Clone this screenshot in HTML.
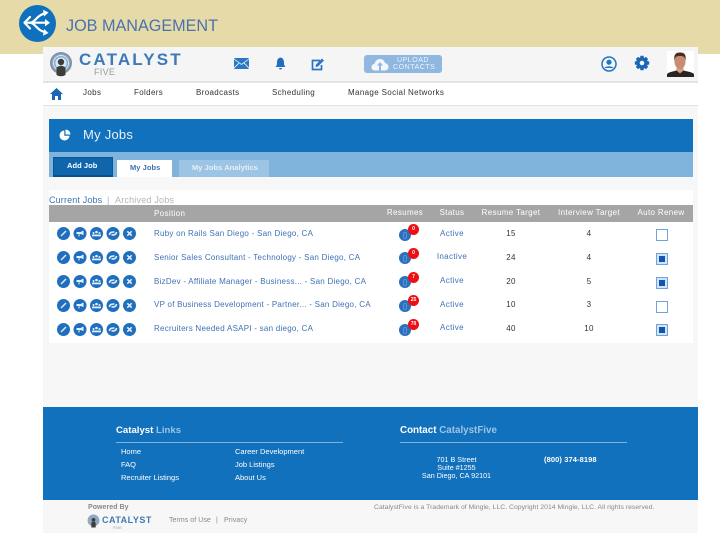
<!DOCTYPE html>
<html><head><meta charset="utf-8">
<style>
html,body{margin:0;padding:0;background:#fff}
body{width:720px;height:540px;position:relative;overflow:hidden;font-family:"Liberation Sans",sans-serif;filter:blur(.35px)}
.a{position:absolute;white-space:nowrap}
.t{position:absolute;white-space:nowrap;font-size:8px;line-height:10px;letter-spacing:.35px;color:#333}
.c{transform:translateX(-50%)}
.l{color:#3f72b4}
.p{letter-spacing:.25px}
.w{color:#fff}
.f{font-size:7.500px;letter-spacing:0}
.g{font-size:7px;letter-spacing:.05px;color:#888}
.bt{font-weight:bold;font-size:7.500px;letter-spacing:.05px}
.cb{position:absolute;left:656px;width:10px;height:10px;border:1px solid #6fa3dc;background:#fff}
.cb.on::after{content:"";position:absolute;left:2px;top:2px;width:6px;height:6px;background:#0f56b3}
.cb.on{background:#d5e4f5}
.r{position:absolute;left:399px;width:12px;height:12px;border-radius:50%;background:#2a70bd}
.r::after{content:"";position:absolute;left:4px;top:3px;border:1px solid #5d94d2;border-radius:2px;width:2px;height:5px}
.b{position:absolute;left:408px;width:11px;height:11px;border-radius:50%;background:#ee0f14;color:#fff;font-size:5px;font-weight:bold;line-height:11px;text-align:center}
</style></head><body>
<div class="a" style="left:0;top:0;width:720px;height:54px;background:#e6dba8"></div>
<svg class="a" style="left:19px;top:5px" width="37" height="37" viewBox="0 0 37 37">
<circle cx="18.500" cy="18.500" r="18.500" fill="#0f71bd"/>
<g fill="none" stroke="#fff" stroke-width="2.200" stroke-linecap="round" stroke-linejoin="round">
<path d="M11 12L5.500 17.700L11 23.500"/>
<path d="M6 17.700H27"/>
<path d="M11 17.700C16 17.700 18 10 25.500 8.500"/>
<path d="M11 17.700C16 17.700 18 25.500 25.500 27"/>
</g>
<g fill="#fff">
<path d="M26 14L31 17.700L26 21.400Z"/>
<path d="M24 4.700L29.500 7.500L25 11.500Z"/>
<path d="M25 24L29.500 28L24 30.700Z"/>
</g></svg>
<div class="a" style="left:66px;top:14px;font-size:16.200px;line-height:24px;color:#4a72ad">JOB MANAGEMENT</div>

<div class="a" style="left:43px;top:47px;width:655px;height:360px;background:#f7f7f7"></div>
<div class="a" style="left:43px;top:47px;width:655px;height:35px;background:#f5f5f5"></div>
<div class="a" style="left:43px;top:81px;width:655px;height:2px;background:#e3e3e3"></div>
<div class="a" style="left:43px;top:83px;width:655px;height:22px;background:#fff"></div>
<div class="a" style="left:43px;top:105px;width:655px;height:1px;background:#e3e3e3"></div>

<svg class="a" style="left:49px;top:51px" width="24" height="26" viewBox="0 0 24 26">
<circle cx="12" cy="12" r="11" fill="#8a8f96"/>
<circle cx="12" cy="12" r="9.300" fill="#7fa9d6"/>
<circle cx="12" cy="12" r="8" fill="#dfe8f1"/>
<circle cx="12" cy="12" r="7" fill="#7fa9d6"/>
<circle cx="12" cy="12" r="5.600" fill="#dfe8f1"/>
<circle cx="12" cy="11" r="3.200" fill="#3d3d3d"/>
<path d="M7.500 16.500Q12 13 16.500 16.500V24Q12 26.500 7.500 24Z" fill="#3d3d3d"/>
</svg>
<div class="a" style="left:79px;top:50px;font-size:17px;line-height:20px;font-weight:bold;color:#3e79b9;letter-spacing:2.150px">CATALYST</div>
<div class="a" style="left:94px;top:67px;font-size:9px;line-height:10px;color:#9b9b9b;letter-spacing:.3px">FIVE</div>

<svg class="a" style="left:234px;top:58px" width="15" height="11" viewBox="0 0 15 11"><rect width="15" height="11" rx="1" fill="#2a77c4"/><path d="M0 1L7.500 6.500L15 1M0 10L5 5M15 10L10 5" fill="none" stroke="#dbe8f5" stroke-width=".9"/></svg>
<svg class="a" style="left:275px;top:57px" width="11" height="13" viewBox="0 0 11 13"><path d="M5.500 0.500C3 1 2 3 2 5.500C2 8 1.500 9 .5 10H10.500C9.500 9 9 8 9 5.500C9 3 8 1 5.500 .5Z M4 11H7C7 13 4 13 4 11Z" fill="#1f6fbe"/></svg>
<svg class="a" style="left:311px;top:58px" width="14" height="13" viewBox="0 0 14 13"><path d="M9 2.500H1.500V11.500H10.500V7" fill="none" stroke="#2a77c4" stroke-width="1.700"/><path d="M4.500 9L5 6.500L11 .5L13 2.500L7 8.500Z" fill="#2a77c4"/></svg>

<div class="a" style="left:364px;top:55px;width:78px;height:18px;border-radius:3px;background:#8fb8e0"></div>
<svg class="a" style="left:371px;top:58px" width="18" height="13" viewBox="0 0 18 13"><path d="M4 12.500C1.500 12.500 .5 11 .5 9C.5 7 2 6 3.500 6C4 3 6.500 1 9 1C12 1 13.500 3 14 5C16 5.300 17.500 7 17.500 9C17.500 11 16 12.500 14 12.500Z" fill="#f3f7fb"/><path d="M9 4L12 7.500H10V12.500H8V7.500H6Z" fill="#8fb8e0"/></svg>
<div class="a" style="left:393px;top:57px;width:40px;text-align:center;font-size:7px;line-height:7px;color:#eef4fa;letter-spacing:.55px">UPLOAD<br>CONTACTS</div>

<svg class="a" style="left:601px;top:56px" width="16" height="16" viewBox="0 0 16 16"><circle cx="8" cy="8" r="7" fill="none" stroke="#1f75c6" stroke-width="1.500"/><circle cx="8" cy="6.200" r="2.600" fill="#1f75c6"/><path d="M3.500 12C4 9.800 12 9.800 12.500 12Z" fill="#1f75c6"/></svg>
<svg class="a" style="left:634px;top:55px" width="16" height="16" viewBox="0 0 16 16"><path d="M6.500.8H9.500L10 3L12 1.900L14.100 4L13 6L15.200 6.500V9.500L13 10L14.100 12L12 14.100L10 13L9.500 15.200H6.500L6 13L4 14.100L1.900 12L3 10L.8 9.500V6.500L3 6L1.900 4L4 1.900L6 3Z" fill="#1a68b5"/><circle cx="8" cy="8" r="2.300" fill="#f5f5f5"/></svg>
<svg class="a" style="left:667px;top:51px" width="27" height="26" viewBox="0 0 27 26"><rect width="27" height="26" fill="#fff"/><path d="M0 26V23C3 20.500 7 20.500 9 19.500H17C19 20.500 24 20.500 27 23V26Z" fill="#2b2422"/><path d="M9.500 19.500L13 22.500L16.500 19.500V15H9.500Z" fill="#cf9f86"/><ellipse cx="13" cy="10.500" rx="5.500" ry="7.500" fill="#c98d72"/><path d="M7.500 10C6.500 3 9 1.500 13 1.500C17 1.500 19.500 3 18.500 10C18 6 17 5 13 5C9 5 8 6 7.500 10Z" fill="#4a2d1d"/></svg>

<svg class="a" style="left:50px;top:88px" width="13" height="12" viewBox="0 0 13 12"><path d="M6.500 0L13 6H11V12H8V8H5V12H2V6H0Z" fill="#1a66b0"/></svg>
<div class="t" style="left:83px;top:88px">Jobs</div>
<div class="t" style="left:134px;top:88px">Folders</div>
<div class="t" style="left:196px;top:88px">Broadcasts</div>
<div class="t" style="left:272px;top:88px">Scheduling</div>
<div class="t" style="left:348px;top:88px">Manage Social Networks</div>

<div class="a" style="left:49px;top:119px;width:644px;height:33px;background:#1271bd"></div>
<svg class="a" style="left:59px;top:129px" width="12" height="12" viewBox="0 0 12 12"><path d="M5.300 1.500A5 5 0 1 0 10.500 6.700H5.300Z" fill="#fff"/><path d="M6.500 .5A5 5 0 0 1 11.500 5.500H6.500Z" fill="#fff"/></svg>
<div class="a" style="left:83px;top:127px;font-size:13px;line-height:16px;color:#e8f1f9;letter-spacing:.25px">My Jobs</div>
<div class="a" style="left:49px;top:152px;width:644px;height:25px;background:#7fb3dc"></div>
<div class="a" style="left:53px;top:157px;width:58px;height:17px;background:#0f66ad;border:1px solid #0b5795;border-bottom:2px solid #0a4f88"></div>
<div class="t w bt" style="left:67px;top:161px">Add Job</div>
<div class="a" style="left:117px;top:160px;width:55px;height:17px;background:#fff"></div>
<div class="t bt" style="left:130px;top:163px;color:#3f72b4">My Jobs</div>
<div class="a" style="left:179px;top:160px;width:90px;height:17px;background:#9cc4e4"></div>
<div class="t bt" style="left:192px;top:163px;color:#e6f0f8">My Jobs Analytics</div>

<div class="a" style="left:49px;top:190px;width:644px;height:153px;background:#fff"></div>
<div class="t" style="left:49px;top:195px;font-size:9px;color:#3f72b4;letter-spacing:.15px">Current Jobs</div>
<div class="t" style="left:107px;top:195px;font-size:9px;color:#8fb3da">|</div>
<div class="t" style="left:115px;top:195px;font-size:9px;color:#b5b5b5;letter-spacing:.2px">Archived Jobs</div>
<div class="a" style="left:49px;top:205px;width:644px;height:17px;background:#a5a5a5"></div>
<div class="t w" style="left:154px;top:209px">Position</div>
<div class="t w c" style="left:405px;top:208px">Resumes</div>
<div class="t w c" style="left:452px;top:208px">Status</div>
<div class="t w c" style="left:511px;top:208px">Resume Target</div>
<div class="t w c" style="left:589px;top:208px">Interview Target</div>
<div class="t w c" style="left:661px;top:208px">Auto Renew</div>

<svg width="0" height="0" style="position:absolute"><defs>
<g id="i1"><circle cx="6.500" cy="6.500" r="6.500" fill="#1f6fbe"/><path d="M4 9L9 4" stroke="#dfeaf6" stroke-width="1.500"/></g>
<g id="i2"><circle cx="6.500" cy="6.500" r="6.500" fill="#1f6fbe"/><path d="M3 5H7L10 3.500V8L7 7H6V9.500H5V7H3Z" fill="#e6eff8"/></g>
<g id="i3"><circle cx="6.500" cy="6.500" r="6.500" fill="#1f6fbe"/><circle cx="6.500" cy="5" r="1.300" fill="#e6eff8"/><circle cx="3.500" cy="6" r="1" fill="#e6eff8"/><circle cx="9.500" cy="6" r="1" fill="#e6eff8"/><rect x="2" y="7.500" width="9" height="1.800" fill="#e6eff8"/></g>
<g id="i4"><circle cx="6.500" cy="6.500" r="6.500" fill="#1f6fbe"/><path d="M3 8C3 5 6 5 8 5M10 5C10 8 7 8 5 8" fill="none" stroke="#e6eff8" stroke-width="1.500"/></g>
<g id="i5"><circle cx="6.500" cy="6.500" r="6.500" fill="#1f6fbe"/><path d="M4.300 4.300L8.700 8.700M8.700 4.300L4.300 8.700" stroke="#e6eff8" stroke-width="1.500"/></g>
<g id="acts"><use href="#i1"/><use href="#i2" x="16.500"/><use href="#i3" x="33"/><use href="#i4" x="49.500"/><use href="#i5" x="66"/></g>
</defs></svg>

<svg class="a" style="left:57px;top:226.500px" width="80" height="13"><use href="#acts"/></svg>
<svg class="a" style="left:57px;top:250.500px" width="80" height="13"><use href="#acts"/></svg>
<svg class="a" style="left:57px;top:274.500px" width="80" height="13"><use href="#acts"/></svg>
<svg class="a" style="left:57px;top:298.500px" width="80" height="13"><use href="#acts"/></svg>
<svg class="a" style="left:57px;top:322.500px" width="80" height="13"><use href="#acts"/></svg>

<div class="t l p" style="left:154px;top:229px">Ruby on Rails San Diego - San Diego, CA</div>
<div class="t l p" style="left:154px;top:253px">Senior Sales Consultant - Technology - San Diego, CA</div>
<div class="t l p" style="left:154px;top:277px">BizDev - Affiliate Manager - Business... - San Diego, CA</div>
<div class="t l p" style="left:154px;top:300px">VP of Business Development - Partner... - San Diego, CA</div>
<div class="t l p" style="left:154px;top:324px">Recruiters Needed ASAPI - san diego, CA</div>

<div class="r" style="top:229px"></div><div class="b" style="top:224px">0</div>
<div class="r" style="top:252px"></div><div class="b" style="top:248px">0</div>
<div class="r" style="top:276px"></div><div class="b" style="top:272px">7</div>
<div class="r" style="top:300px"></div><div class="b" style="top:295px">25</div>
<div class="r" style="top:324px"></div><div class="b" style="top:319px">70</div>

<div class="t l c" style="left:452px;top:229px">Active</div>
<div class="t l c" style="left:452px;top:252px">Inactive</div>
<div class="t l c" style="left:452px;top:276px">Active</div>
<div class="t l c" style="left:452px;top:300px">Active</div>
<div class="t l c" style="left:452px;top:323px">Active</div>

<div class="t c" style="left:511px;top:229px">15</div>
<div class="t c" style="left:511px;top:253px">24</div>
<div class="t c" style="left:511px;top:277px">20</div>
<div class="t c" style="left:511px;top:300px">10</div>
<div class="t c" style="left:511px;top:324px">40</div>
<div class="t c" style="left:589px;top:229px">4</div>
<div class="t c" style="left:589px;top:253px">4</div>
<div class="t c" style="left:589px;top:277px">5</div>
<div class="t c" style="left:589px;top:300px">3</div>
<div class="t c" style="left:589px;top:324px">10</div>

<div class="cb" style="top:229px"></div>
<div class="cb on" style="top:253px"></div>
<div class="cb on" style="top:277px"></div>
<div class="cb" style="top:301px"></div>
<div class="cb on" style="top:324px"></div>

<div class="a" style="left:43px;top:407px;width:655px;height:93px;background:#1271bd"></div>
<div class="a" style="left:116px;top:425px;font-size:9.600px;line-height:11px;font-weight:bold;color:#fff">Catalyst <span style="color:#9cc4e4">Links</span></div>
<div class="a" style="left:116px;top:442px;width:227px;height:1px;background:#7fb3dc"></div>
<div class="t w f" style="left:121px;top:447px">Home</div>
<div class="t w f" style="left:121px;top:460px">FAQ</div>
<div class="t w f" style="left:121px;top:473px">Recruiter Listings</div>
<div class="t w f" style="left:235px;top:447px">Career Development</div>
<div class="t w f" style="left:235px;top:460px">Job Listings</div>
<div class="t w f" style="left:235px;top:473px">About Us</div>
<div class="a" style="left:400px;top:425px;font-size:9.800px;line-height:11px;font-weight:bold;color:#fff">Contact <span style="color:#9cc4e4">CatalystFive</span></div>
<div class="a" style="left:400px;top:442px;width:227px;height:1px;background:#7fb3dc"></div>
<div class="t w c" style="left:456.500px;top:455.500px;text-align:center;font-size:7.200px;letter-spacing:0;line-height:8.200px">701 B Street<br>Suite #1255<br>San Diego, CA 92101</div>
<div class="t w" style="left:544px;top:455px;font-weight:bold;font-size:7.500px;letter-spacing:.1px">(800) 374-8198</div>

<div class="a" style="left:43px;top:500px;width:655px;height:33px;background:#f7f7f7"></div>
<div class="t g" style="left:88px;top:503px;font-weight:bold">Powered By</div>
<svg class="a" style="left:87px;top:514px" width="13" height="14" viewBox="0 0 24 26"><circle cx="12" cy="12" r="11" fill="#8fa9c4"/><circle cx="12" cy="11" r="3.500" fill="#3d3d3d"/><path d="M8 16Q12 13 16 16V25H8Z" fill="#3d3d3d"/></svg>
<div class="a" style="left:102px;top:515px;font-size:9px;line-height:11px;font-weight:bold;color:#3e79b9;letter-spacing:.5px">CATALYST</div>
<div class="a" style="left:113px;top:525px;font-size:4px;line-height:5px;color:#999">FIVE</div>
<div class="t g" style="left:169px;top:516px">Terms of Use</div>
<div class="t g" style="left:216px;top:516px">|</div>
<div class="t g" style="left:224px;top:516px">Privacy</div>
<div class="t" style="left:374px;top:503px;font-size:6.800px;color:#888;letter-spacing:.03px">CatalystFive is a Trademark of Mingle, LLC. Copyright 2014 Mingle, LLC. All rights reserved.</div>
</body></html>
